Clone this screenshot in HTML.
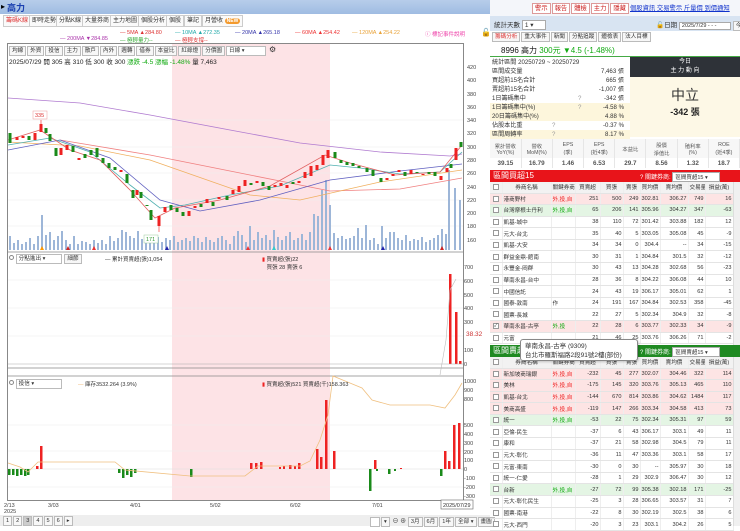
<!DOCTYPE html>
<html><head><meta charset="utf-8">
<style>
*{margin:0;padding:0;box-sizing:border-box}
body{width:740px;height:526px;overflow:hidden;background:#fff;font-family:"Liberation Sans","Noto Sans CJK TC",sans-serif;font-size:7px;color:#333;position:relative}
.a{position:absolute;white-space:nowrap}
.tab{position:absolute;top:15px;height:12px;border:1px solid #ccc;background:#fafafa;font-size:6px;line-height:10px;padding:0 2px;color:#333}
.tb{display:inline-block;border:1px solid #bbb;background:#f7f7f7;padding:0 2px;margin-right:1px;line-height:8px;font-size:5.6px}
table{border-collapse:collapse;table-layout:fixed}
.bt td{height:11.6px;border-bottom:1px solid #e4e4e4;border-right:1px solid #eee;font-size:5.6px;padding:0 1px;text-align:right;white-space:nowrap;overflow:hidden}
.bt td.n{text-align:left}
.bt td.c{text-align:center;padding:0}
.bt tr.h td{background:#f2f2f2;text-align:center;height:11px}
.bt tr.p td{background:#fde4e4}
.bt tr.g td{background:#e4f5e4}
.cb{display:inline-block;width:6px;height:6px;border:1px solid #999;background:#fff;vertical-align:middle;font-size:5px;line-height:5px}
.st div{height:9px;line-height:9px;font-size:6.1px;position:relative;padding-left:2px}
.st span{position:absolute;right:6px}
.st .y{background:#fdf6dc}
.st i{position:absolute;left:88px;color:#999;font-style:normal}
.r{color:#e22}.gr{color:#1a1}
.fin td{font-size:5.3px;text-align:center;border-right:1px solid #e6e6e6;color:#555}
.fin tr.v td{font-size:6.3px;font-weight:bold;height:10px}
.btn{display:inline-block;border:1px solid #d99;background:#fff;color:#c22;font-size:6.3px;padding:0 2px;line-height:9px;margin-right:1px}
</style></head><body>

<!-- ============ LEFT ============ -->
<div class="a" style="left:0;top:0;width:490px;height:14px;background:linear-gradient(#b7cdea,#9fbce2)"></div>
<div class="a" style="left:1px;top:2px;font-size:8px;color:#000">▸</div>
<div class="a" style="left:7px;top:1px;font-size:9px;font-weight:bold;color:#1a3fb0">高力</div>

<div class="tab" style="left:3px;color:#d33">籌碼K線</div>
<div class="tab" style="left:29px">即時走勢</div>
<div class="tab" style="left:56px">分點K線</div>
<div class="tab" style="left:82px">大量券商</div>
<div class="tab" style="left:110px">主力地圖</div>
<div class="tab" style="left:138px">個股分析</div>
<div class="tab" style="left:166px">個股</div>
<div class="tab" style="left:184px">筆記</div>
<div class="tab" style="left:202px">月營收 <b style="background:#f39a2e;color:#fff;border-radius:4px;padding:0 2px;font-size:5px">NEW</b></div>

<div class="a" style="top:30px;left:120px;font-size:5.5px;color:#d33">— 5MA ▲284.80</div>
<div class="a" style="top:30px;left:175px;font-size:5.5px;color:#2aa">— 10MA ▲272.35</div>
<div class="a" style="top:30px;left:235px;font-size:5.5px;color:#33a">— 20MA ▲265.18</div>
<div class="a" style="top:30px;left:295px;font-size:5.5px;color:#e33">— 60MA ▲254.42</div>
<div class="a" style="top:30px;left:352px;font-size:5.5px;color:#e9a33a">— 120MA ▲254.22</div>
<div class="a" style="top:36px;left:60px;font-size:5.5px;color:#a3a">— 200MA ▼284.85</div>
<div class="a" style="top:36px;left:120px;font-size:5.5px;color:#3a3">— 極輕量力--</div>
<div class="a" style="top:36px;left:175px;font-size:5.5px;color:#d33">— 極輕支撐--</div>
<div class="a" style="top:30px;left:425px;font-size:5.5px;color:#e4a">ⓘ 標記事件說明</div>
<div class="a" style="top:28px;left:481px;font-size:8px;color:#000">🔓</div>

<!-- chart frame -->
<div class="a" style="left:7px;top:43px;width:457px;height:458px;border:1px solid #888"></div>
<div class="a" style="left:172px;top:44px;width:158px;height:456px;background:#fde3e6"></div>
<div class="a" style="left:9px;top:45px"><span class="tb">均線</span><span class="tb">外資</span><span class="tb">投信</span><span class="tb">主力</span><span class="tb">散戶</span><span class="tb">內外</span><span class="tb">週轉</span><span class="tb">借券</span><span class="tb">本益比</span><span class="tb">紅綠燈</span><span class="tb">分價圖</span><span class="tb" style="width:40px;background:#fff">日線 ▾</span> <span style="font-size:8px">⚙</span></div>
<div class="a" style="left:9px;top:56px;font-size:6.5px;color:#222">2025/07/29 開 305 高 310 低 300 收 300 <span class="gr">漲跌 -4.5 漲幅 -1.48%</span> 量 7,463</div>

<svg class="a" style="left:0;top:43px" width="490" height="472" viewBox="0 43 490 472">
 <g stroke="#eee" stroke-width="0.6">
  <line x1="8" y1="120" x2="463" y2="120"/><line x1="8" y1="147" x2="463" y2="147"/><line x1="8" y1="173" x2="463" y2="173"/><line x1="8" y1="200" x2="463" y2="200"/><line x1="8" y1="226" x2="463" y2="226"/>
  <line x1="8" y1="280" x2="463" y2="280"/><line x1="8" y1="308" x2="463" y2="308"/><line x1="8" y1="336" x2="463" y2="336"/>
  <line x1="8" y1="425" x2="463" y2="425"/><line x1="8" y1="451" x2="463" y2="451"/><line x1="8" y1="487" x2="463" y2="487"/>
 </g>
 <g font-size="5.5" fill="#444" font-family="Liberation Sans">
  <text x="467" y="69">420</text><text x="467" y="82">400</text><text x="467" y="96">380</text><text x="467" y="109">360</text><text x="467" y="122">340</text><text x="467" y="135">320</text><text x="467" y="149">300</text><text x="467" y="162">280</text><text x="467" y="175">260</text><text x="467" y="189">240</text><text x="467" y="202">220</text><text x="467" y="215">200</text><text x="467" y="228">180</text><text x="467" y="242">160</text>
  <text x="464" y="269">700</text><text x="464" y="283">600</text><text x="464" y="297">500</text><text x="464" y="310">400</text><text x="464" y="324">300</text><text x="464" y="352">100</text><text x="464" y="366">0</text>
  <text x="464" y="383">1000</text><text x="464" y="392">900</text><text x="464" y="401">800</text><text x="464" y="427">500</text><text x="464" y="436">400</text><text x="464" y="445">300</text><text x="464" y="454">200</text><text x="464" y="462">100</text><text x="464" y="471">0</text><text x="464" y="480">-100</text><text x="464" y="489">-200</text><text x="464" y="498">-300</text>
  <text x="4" y="507">2/13</text><text x="4" y="513">2025</text><text x="48" y="507">3/03</text><text x="130" y="507">4/01</text><text x="210" y="507">5/02</text><text x="290" y="507">6/02</text><text x="372" y="507">7/01</text>
 </g>
 <text x="466" y="336" font-size="6.5" fill="#c33">38.32</text>
 <rect x="441" y="500" width="32" height="9" fill="#fff" stroke="#666" stroke-width="0.6"/><text x="443" y="507" font-size="5.5" fill="#333">2025/07/29</text>
 <line x1="8" y1="252" x2="463" y2="252" stroke="#888" stroke-width="0.8"/>
 <line x1="8" y1="368" x2="463" y2="368" stroke="#888" stroke-width="0.8"/>
 <line x1="8" y1="376" x2="463" y2="376" stroke="#888" stroke-width="0.8"/>
 <path stroke="#9db6d8" stroke-width="2" d="M10 250V236M14 250V243M18 250V240M22 250V244M26 250V242M30 250V238M34 250V244M38 250V236M42 250V215M46 250V235M50 250V232M54 250V240M58 250V236M62 250V231M66 250V240M70 250V244M74 250V236M78 250V244M82 250V241M86 250V242M90 250V244M94 250V240M98 250V243M102 250V240M106 250V244M110 250V236M114 250V241M118 250V238M122 250V230M126 250V232M130 250V236M134 250V238M138 250V231M142 250V239M146 250V236M150 250V238M154 250V236M158 250V237M162 250V242M166 250V238M170 250V240M174 250V236M178 250V242M182 250V240M186 250V238M190 250V241M194 250V236M198 250V238M202 250V242M206 250V237M210 250V240M214 250V242M218 250V238M222 250V236M226 250V240M230 250V244M234 250V236M238 250V231M242 250V235M246 250V242M250 250V226M254 250V240M258 250V232M262 250V238M266 250V235M270 250V240M274 250V230M278 250V237M282 250V240M286 250V236M290 250V232M294 250V240M298 250V238M302 250V234M306 250V240M310 250V232M314 250V214M318 250V216M322 250V190M326 250V180M330 250V205M334 250V233M338 250V238M342 250V236M346 250V239M350 250V238M354 250V236M358 250V228M362 250V238M366 250V225M370 250V240M374 250V238M378 250V244M382 250V226M386 250V238M390 250V232M394 250V232M398 250V238M402 250V240M406 250V235M410 250V241M414 250V239M418 250V240M422 250V237M426 250V242M430 250V240M434 250V238M438 250V235M442 250V229M446 250V234M449 250V170M455 250V188M460 250V200"/>
 <g fill="none" stroke-width="0.8">
  <polyline stroke="#b07bd0" points="8,98 80,103 150,115 230,130 300,143 380,152 450,156 462,154"/>
  <polyline stroke="#f08080" points="60,140 150,155 250,175 330,191 400,189 462,178"/>
  <polyline stroke="#f0b060" points="8,142 80,146 150,160 250,195 300,200 380,182 462,170"/>
  <polyline stroke="#6060c0" points="8,150 60,140 110,158 160,200 200,211 260,200 330,180 400,171 462,164"/>
  <polyline stroke="#50b0b0" points="8,145 50,138 90,152 130,185 160,208 185,205 230,195 280,186 330,165 360,168 400,174 440,172 462,152"/>
  <polyline stroke="#e06060" points="8,140 40,130 70,150 100,160 130,190 155,218 175,208 220,200 270,186 325,155 350,163 395,175 440,172 462,145"/>
 </g>
 <g stroke-width="0.6" transform="translate(0.5,0)">
  <rect x="8" y="133" width="3" height="10" fill="#1a8a1a"/>
  <rect x="15" y="137" width="3" height="3" fill="#e22"/>
  <rect x="21" y="136" width="3" height="2" fill="#e22"/>
  <rect x="27" y="136" width="3" height="4" fill="#1a8a1a"/>
  <rect x="33" y="133" width="3" height="7" fill="#e22"/>
  <rect x="39" y="124" width="3" height="8" fill="#e22"/><line x1="40.5" y1="120" x2="40.5" y2="124" stroke="#e22"/>
  <rect x="44" y="128" width="3" height="5" fill="#1a8a1a"/>
  <rect x="48" y="134" width="3" height="7" fill="#1a8a1a"/>
  <rect x="54" y="148" width="3" height="8" fill="#1a8a1a"/>
  <rect x="59" y="148" width="3" height="7" fill="#e22"/>
  <rect x="65" y="145" width="3" height="5" fill="#e22"/>
  <rect x="71" y="146" width="3" height="6" fill="#1a8a1a"/>
  <rect x="77" y="158" width="3" height="2" fill="#e22"/>
  <rect x="83" y="154" width="3" height="4" fill="#1a8a1a"/>
  <rect x="89" y="150" width="3" height="5" fill="#1a8a1a"/>
  <rect x="95" y="148" width="3" height="9" fill="#1a8a1a"/>
  <rect x="101" y="158" width="3" height="5" fill="#1a8a1a"/>
  <rect x="107" y="163" width="3" height="5" fill="#1a8a1a"/>
  <rect x="113" y="167" width="3" height="3" fill="#1a8a1a"/>
  <rect x="119" y="170" width="3" height="2" fill="#e22"/>
  <rect x="125" y="174" width="3" height="9" fill="#1a8a1a"/>
  <rect x="131" y="190" width="3" height="8" fill="#1a8a1a"/>
  <rect x="135" y="190" width="3" height="5" fill="#e22"/>
  <rect x="139" y="192" width="3" height="6" fill="#1a8a1a"/>
  <rect x="145" y="205" width="3" height="1" fill="#1a8a1a"/>
  <rect x="149" y="210" width="3" height="10" fill="#1a8a1a"/>
  <rect x="157" y="216" width="3" height="10" fill="#e22"/><line x1="158.5" y1="226" x2="158.5" y2="232" stroke="#e22"/>
  <rect x="163" y="207" width="3" height="5" fill="#e22"/>
  <rect x="169" y="205" width="3" height="5" fill="#1a8a1a"/>
  <rect x="175" y="208" width="3" height="4" fill="#1a8a1a"/>
  <rect x="181" y="212" width="3" height="4" fill="#1a8a1a"/>
  <rect x="187" y="211" width="3" height="5" fill="#e22"/>
  <rect x="193" y="206" width="3" height="2" fill="#e22"/>
  <rect x="199" y="204" width="3" height="3" fill="#1a8a1a"/>
  <rect x="205" y="199" width="3" height="4" fill="#e22"/>
  <rect x="211" y="202" width="3" height="4" fill="#1a8a1a"/>
  <rect x="217" y="197" width="3" height="2" fill="#e22"/>
  <rect x="225" y="196" width="3" height="4" fill="#1a8a1a"/>
  <rect x="231" y="190" width="3" height="4" fill="#e22"/>
  <rect x="237" y="186" width="3" height="6" fill="#e22"/>
  <rect x="243" y="180" width="3" height="6" fill="#e22"/>
  <rect x="249" y="183" width="3" height="2" fill="#1a8a1a"/>
  <rect x="255" y="181" width="3" height="2" fill="#e22"/>
  <rect x="261" y="182" width="3" height="4" fill="#1a8a1a"/>
  <rect x="267" y="186" width="3" height="4" fill="#1a8a1a"/>
  <rect x="273" y="185" width="3" height="2" fill="#e22"/>
  <rect x="279" y="183" width="3" height="3" fill="#e22"/>
  <rect x="285" y="185" width="3" height="3" fill="#e22"/>
  <rect x="291" y="182" width="3" height="2" fill="#1a8a1a"/>
  <rect x="297" y="181" width="3" height="2" fill="#e22"/>
  <rect x="303" y="172" width="3" height="6" fill="#e22"/>
  <rect x="309" y="166" width="3" height="10" fill="#e22"/>
  <rect x="315" y="165" width="3" height="5" fill="#e22"/>
  <rect x="321" y="155" width="3" height="10" fill="#e22"/>
  <rect x="326" y="150" width="3" height="8" fill="#e22"/>
  <rect x="333" y="152" width="3" height="6" fill="#1a8a1a"/>
  <rect x="339" y="160" width="3" height="3" fill="#1a8a1a"/>
  <rect x="345" y="162" width="3" height="3" fill="#1a8a1a"/>
  <rect x="351" y="163" width="3" height="3" fill="#1a8a1a"/>
  <rect x="357" y="166" width="3" height="2" fill="#1a8a1a"/>
  <rect x="365" y="168" width="3" height="4" fill="#1a8a1a"/>
  <rect x="371" y="170" width="3" height="6" fill="#1a8a1a"/>
  <rect x="379" y="178" width="3" height="4" fill="#1a8a1a"/>
  <rect x="385" y="178" width="3" height="2" fill="#e22"/>
  <rect x="391" y="174" width="3" height="2" fill="#e22"/>
  <rect x="397" y="170" width="3" height="2" fill="#e22"/>
  <rect x="403" y="172" width="3" height="4" fill="#1a8a1a"/>
  <rect x="409" y="170" width="3" height="4" fill="#e22"/>
  <rect x="415" y="172" width="3" height="1" fill="#1a8a1a"/>
  <rect x="421" y="174" width="3" height="1" fill="#e22"/>
  <rect x="427" y="172" width="3" height="2" fill="#1a8a1a"/>
  <rect x="433" y="172" width="3" height="4" fill="#1a8a1a"/>
  <rect x="439" y="176" width="3" height="4" fill="#e22"/>
  <rect x="445" y="168" width="3" height="4" fill="#e22"/>
  <rect x="449" y="164" width="3" height="4" fill="#1a8a1a"/>
  <rect x="454" y="148" width="3" height="12" fill="#e22"/>
  <rect x="459" y="142" width="3" height="5" fill="#1a8a1a"/>
 </g>
 <rect x="33" y="111" width="14" height="8" fill="#fff" stroke="#e99" stroke-width="0.5"/><text x="35" y="117" font-size="5.5" fill="#d33">335</text>
 <rect x="144" y="235" width="14" height="8" fill="#fff" stroke="#9c9" stroke-width="0.5"/><text x="146" y="241" font-size="5.5" fill="#393">171</text>
 <g><path d="M40 250l2-4 2 4z" fill="#f90"/><path d="M66 250l2-4 2 4z" fill="#c22"/><path d="M92 250l2-4 2 4z" fill="#e33"/><path d="M165 250l2-4 2 4z" fill="#22a"/><path d="M246 250l2-4 2 4z" fill="#e33"/><path d="M272 250l2-4 2 4z" fill="#3cc"/><path d="M328 250l2-4 2 4z" fill="#e33"/><path d="M381 250l2-4 2 4z" fill="#22a"/><path d="M440 250l2-4 2 4z" fill="#c22"/></g>
 <rect x="449" y="274" width="2.5" height="90" fill="#e22"/><rect x="455" y="312" width="2.5" height="52" fill="#e22"/><rect x="459" y="361" width="2.5" height="3" fill="#e22"/>
 <line x1="8" y1="364" x2="463" y2="364" stroke="#aaa" stroke-width="0.5"/>
 <polyline fill="none" stroke="#bbb" stroke-width="0.6" points="440,375 446,340 450,290 456,279"/>
 <line x1="8" y1="469" x2="463" y2="469" stroke="#ddd" stroke-width="0.5"/>
 <g fill="#1a8a1a"><rect x="8" y="469" width="2.5" height="6"/><rect x="12" y="469" width="2.5" height="6"/><rect x="16" y="469" width="2.5" height="7"/><rect x="20" y="469" width="2.5" height="6"/><rect x="24" y="469" width="2.5" height="7"/><rect x="27" y="469" width="2.5" height="6"/><rect x="118" y="469" width="2.5" height="4"/><rect x="122" y="469" width="2.5" height="9"/><rect x="126" y="469" width="2.5" height="6"/><rect x="130" y="469" width="2.5" height="8"/><rect x="134" y="469" width="2.5" height="4"/><rect x="190" y="469" width="2.5" height="8"/><rect x="369" y="469" width="2.5" height="22"/><rect x="376" y="469" width="2" height="2"/><rect x="388" y="469" width="2.5" height="5"/><rect x="394" y="469" width="2" height="2"/><rect x="440" y="469" width="2.5" height="7"/></g>
 <g fill="#e22"><rect x="36" y="466" width="2.5" height="3"/><rect x="40" y="446" width="2.5" height="23"/><rect x="250" y="463" width="2.5" height="6"/><rect x="255" y="463" width="2.5" height="6"/><rect x="260" y="462" width="2.5" height="7"/><rect x="279" y="467" width="2" height="2"/><rect x="283" y="466" width="2" height="3"/><rect x="289" y="465" width="2.5" height="4"/><rect x="294" y="466" width="2" height="3"/><rect x="298" y="463" width="2.5" height="6"/><rect x="316" y="449" width="2.5" height="20"/><rect x="320" y="457" width="2.5" height="12"/><rect x="325" y="400" width="2.5" height="69"/><rect x="333" y="451" width="2.5" height="18"/><rect x="374" y="460" width="2.5" height="9"/><rect x="400" y="468" width="2" height="1"/><rect x="444" y="451" width="2.5" height="18"/><rect x="448" y="461" width="2.5" height="8"/><rect x="453" y="425" width="2.5" height="44"/><rect x="458" y="423" width="2.5" height="46"/></g>
 <polyline fill="none" stroke="#f0c080" stroke-width="0.8" points="8,463 20,467 28,472 38,462 115,462 125,470 190,476 245,476 258,466 300,466 310,461 320,440 328,415 333,376 362,388 372,400 390,405 430,405 445,408 455,395 462,383"/>
</svg>

<div class="a" style="left:9px;top:254px;font-size:6px"><span style="display:inline-block;width:5px;height:5px;border:1px solid #888;border-radius:50%"></span> <span class="tb" style="width:46px;background:#fff">分點進出 ▾</span> <span class="tb">細節</span></div>
<div class="a" style="left:105px;top:255px;font-size:5.5px">— 累計買賣超(張)1,054</div>
<div class="a" style="left:262px;top:255px;font-size:5.5px"><span class="r">▮</span> 買賣超(張)22<br>&nbsp;&nbsp;&nbsp;買張 28 賣張 6</div>
<div class="a" style="left:9px;top:379px;font-size:6px"><span style="display:inline-block;width:5px;height:5px;border:1px solid #888;border-radius:50%"></span> <span class="tb" style="width:46px;background:#fff">投信 ▾</span></div>
<div class="a" style="left:78px;top:380px;font-size:5.5px"><span style="color:#f0b060">—</span> 庫存3532.264 (3.9%)</div>
<div class="a" style="left:262px;top:380px;font-size:5.5px"><span class="r">▮</span> 買賣超(張)521 買賣超(千)158.363</div>

<div class="a" style="left:0;top:515px;width:490px;height:11px;background:#eee"></div>
<div class="a" style="left:3px;top:516px;font-size:6px"><span class="tb">1</span><span class="tb">2</span><span class="tb" style="background:#ccc">3</span><span class="tb">4</span><span class="tb">5</span><span class="tb">6</span><span class="tb">▸</span></div>
<div class="a" style="left:370px;top:516px;font-size:6px"><span class="tb" style="width:10px;background:#fff">&nbsp;</span><span class="tb">▾</span> ⊖ ⊕ <span class="tb">3月</span><span class="tb">6月</span><span class="tb">1年</span><span class="tb">全部 ▾</span><span class="tb">畫圖</span></div>

<!-- ============ RIGHT ============ -->
<div class="a" style="left:490px;top:0;width:250px;height:16px;background:#f4f6fa"></div>
<div class="a" style="left:532px;top:3px"><span class="btn">警示</span><span class="btn">報告</span><span class="btn">體檢</span><span class="btn">主力</span><span class="btn">隱藏</span></div>
<div class="a" style="left:630px;top:3px;font-size:6.3px;color:#13c;text-decoration:underline">個股資訊 交易警示 斤量價 到價通知</div>
<div class="a" style="left:490px;top:16px;width:250px;height:15px;background:#d8e4f2"></div>
<div class="a" style="left:494px;top:19px;font-size:6.5px">統計天數 <span style="display:inline-block;width:24px;border:1px solid #aaa;background:#fff;padding-left:2px">1 ▾</span></div>
<div class="a" style="left:656px;top:19px;font-size:6.5px">🔓日期 <span style="display:inline-block;width:52px;border:1px solid #aaa;background:#fff;padding-left:2px;font-size:5.5px">2025/7/29 ‑ ‑ ‑</span> <span class="tb">今天</span></div>
<div class="a" style="left:492px;top:32px;font-size:6px"><span class="tb" style="color:#d33">籌碼分析</span><span class="tb">重大事件</span><span class="tb">新聞</span><span class="tb">分點追蹤</span><span class="tb">體檢表</span><span class="tb">法人目標</span></div>
<div class="a" style="left:490px;top:43px;width:250px;height:14px;border-bottom:1.5px solid #4a4"></div>
<div class="a" style="left:501px;top:45px;font-size:8px;color:#111">8996 高力 <span class="gr">300元 ▼4.5 (-1.48%)</span></div>

<div class="a st" style="left:490px;top:58px;width:140px">
 <div>統計區間 20250729 ~ 20250729</div>
 <div>區間成交量<span>7,463 張</span></div>
 <div>買超前15名合計<span>665 張</span></div>
 <div>賣超前15名合計<span>-1,007 張</span></div>
 <div>1日籌碼集中<i>?</i><span>-342 張</span></div>
 <div class="y">1日籌碼集中(%)<i>?</i><span>-4.58 %</span></div>
 <div class="y">20日籌碼集中(%)<span>4.88 %</span></div>
 <div>佔股本比重<i style="left:62px">?</i><span>-0.37 %</span></div>
 <div class="y">區間周轉率<i style="left:62px">?</i><span>8.17 %</span></div>
</div>
<div class="a" style="left:630px;top:57px;width:110px;height:20px;background:#2e3238;color:#fff;text-align:center;font-size:6px;line-height:9px;padding-top:1px">今日<br>主 力 動 向</div>
<div class="a" style="left:630px;top:77px;width:110px;height:60px;background:#fdf8e6;text-align:center">
 <div style="font-size:14px;color:#333;margin-top:8px">中立</div>
 <div style="font-size:9px;font-weight:bold;color:#222">-342 張</div>
</div>

<table class="a fin" style="left:490px;top:139px;width:250px">
 <tr style="height:19px;background:#f7f7f7"><td>累計營收<br>YoY(%)</td><td>營收<br>MoM(%)</td><td>EPS<br>(季)</td><td>EPS<br>(近4季)</td><td>本益比</td><td>股價<br>淨值比</td><td>殖利率<br>(%)</td><td>ROE<br>(近4季)</td></tr>
 <tr class="v"><td class="r">39.15</td><td class="r">16.79</td><td class="r">1.46</td><td class="r">6.53</td><td class="gr">29.7</td><td class="gr">8.56</td><td class="gr">1.32</td><td>18.7</td></tr>
</table>

<div class="a" style="left:490px;top:170px;width:250px;height:12px;background:#e8141a;color:#fff;font-size:8px;line-height:12px;padding-left:3px">區間買超15</div>
<div class="a" style="left:640px;top:172px;font-size:6px;color:#fff">? 關鍵券商: <span style="display:inline-block;width:48px;background:#fff;color:#333;border:1px solid #aaa;padding-left:2px;font-size:5.5px">區間買超15 ▾</span></div>

<table class="a bt" style="left:490px;top:182px;width:243px">
 <colgroup><col style="width:12px"><col style="width:49px"><col style="width:24px"><col style="width:25px"><col style="width:23px"><col style="width:17px"><col style="width:20px"><col style="width:28px"><col style="width:17px"><col style="width:28px"></colgroup>
 <tr class="h"><td class="c"><span class="cb"></span></td><td>券商名稱</td><td>關鍵券商</td><td>買賣超</td><td>買張</td><td>賣張</td><td>買均價</td><td>賣均價</td><td>交易量</td><td>損益(萬)</td></tr>
 <tr class="p"><td class="c"><span class="cb"></span></td><td class="n">港商野村</td><td class="n r">外,投,自</td><td>251</td><td>500</td><td>249</td><td>302.81</td><td>306.27</td><td>749</td><td>16</td></tr>
 <tr class="g"><td class="c"><span class="cb"></span></td><td class="n">台灣摩根士丹利</td><td class="n gr">外,投,自</td><td>65</td><td>206</td><td>141</td><td>305.96</td><td>304.27</td><td>347</td><td>-63</td></tr>
 <tr><td class="c"><span class="cb"></span></td><td class="n">凱基-城中</td><td></td><td>38</td><td>110</td><td>72</td><td>301.42</td><td>303.88</td><td>182</td><td>12</td></tr>
 <tr><td class="c"><span class="cb"></span></td><td class="n">元大-台北</td><td></td><td>35</td><td>40</td><td>5</td><td>303.05</td><td>305.08</td><td>45</td><td>-9</td></tr>
 <tr><td class="c"><span class="cb"></span></td><td class="n">凱基-大安</td><td></td><td>34</td><td>34</td><td>0</td><td>304.4</td><td>--</td><td>34</td><td>-15</td></tr>
 <tr><td class="c"><span class="cb"></span></td><td class="n">群益金鼎-館南</td><td></td><td>30</td><td>31</td><td>1</td><td>304.84</td><td>301.5</td><td>32</td><td>-12</td></tr>
 <tr><td class="c"><span class="cb"></span></td><td class="n">永豐金-岡群</td><td></td><td>30</td><td>43</td><td>13</td><td>304.28</td><td>302.68</td><td>56</td><td>-23</td></tr>
 <tr><td class="c"><span class="cb"></span></td><td class="n">華南永昌-台中</td><td></td><td>28</td><td>36</td><td>8</td><td>304.22</td><td>306.08</td><td>44</td><td>10</td></tr>
 <tr><td class="c"><span class="cb"></span></td><td class="n">中國信託</td><td></td><td>24</td><td>43</td><td>19</td><td>306.17</td><td>305.01</td><td>62</td><td>1</td></tr>
 <tr><td class="c"><span class="cb"></span></td><td class="n">國泰-敦南</td><td class="n">作</td><td>24</td><td>191</td><td>167</td><td>304.84</td><td>302.53</td><td>358</td><td>-45</td></tr>
 <tr><td class="c"><span class="cb"></span></td><td class="n">國票-長城</td><td></td><td>22</td><td>27</td><td>5</td><td>302.34</td><td>304.9</td><td>32</td><td>-8</td></tr>
 <tr class="p"><td class="c"><span class="cb">✓</span></td><td class="n">華南永昌-古亭</td><td class="n gr">外,投</td><td>22</td><td>28</td><td>6</td><td>303.77</td><td>302.33</td><td>34</td><td>-9</td></tr>
 <tr><td class="c"><span class="cb"></span></td><td class="n">元富</td><td></td><td>21</td><td>46</td><td>25</td><td>303.76</td><td>306.26</td><td>71</td><td>-2</td></tr>
</table>
<div class="a" style="left:733px;top:182px;width:7px;height:163px;background:#f0f0f0;border-left:1px solid #ddd"></div>

<div class="a" style="left:490px;top:345px;width:250px;height:12px;background:#1f8a22;color:#fff;font-size:8px;line-height:12px;padding-left:3px">區間賣超15</div>
<div class="a" style="left:640px;top:347px;font-size:6px;color:#fff">? 關鍵券商: <span style="display:inline-block;width:48px;background:#fff;color:#333;border:1px solid #aaa;padding-left:2px;font-size:5.5px">區間賣超15 ▾</span></div>

<table class="a bt" style="left:490px;top:357px;width:243px">
 <colgroup><col style="width:12px"><col style="width:49px"><col style="width:24px"><col style="width:25px"><col style="width:23px"><col style="width:17px"><col style="width:20px"><col style="width:28px"><col style="width:17px"><col style="width:28px"></colgroup>
 <tr class="h"><td class="c"><span class="cb"></span></td><td>券商名稱</td><td>關鍵券商</td><td>買賣超</td><td>買張</td><td>賣張</td><td>買均價</td><td>賣均價</td><td>交易量</td><td>損益(萬)</td></tr>
 <tr class="p"><td class="c"><span class="cb"></span></td><td class="n">新加坡商瑞銀</td><td class="n r">外,投,自</td><td>-232</td><td>45</td><td>277</td><td>302.07</td><td>304.46</td><td>322</td><td>114</td></tr>
 <tr class="p"><td class="c"><span class="cb"></span></td><td class="n">美林</td><td class="n r">外,投,自</td><td>-175</td><td>145</td><td>320</td><td>303.76</td><td>305.13</td><td>465</td><td>110</td></tr>
 <tr class="p"><td class="c"><span class="cb"></span></td><td class="n">凱基-台北</td><td class="n r">外,投,自</td><td>-144</td><td>670</td><td>814</td><td>303.86</td><td>304.62</td><td>1484</td><td>117</td></tr>
 <tr class="p"><td class="c"><span class="cb"></span></td><td class="n">美商高盛</td><td class="n r">外,投,自</td><td>-119</td><td>147</td><td>266</td><td>303.34</td><td>304.58</td><td>413</td><td>73</td></tr>
 <tr class="g"><td class="c"><span class="cb"></span></td><td class="n">統一</td><td class="n gr">外,投,自</td><td>-53</td><td>22</td><td>75</td><td>302.34</td><td>305.31</td><td>97</td><td>59</td></tr>
 <tr><td class="c"><span class="cb"></span></td><td class="n">亞倫-民生</td><td></td><td>-37</td><td>6</td><td>43</td><td>306.17</td><td>303.1</td><td>49</td><td>11</td></tr>
 <tr><td class="c"><span class="cb"></span></td><td class="n">康和</td><td></td><td>-37</td><td>21</td><td>58</td><td>302.98</td><td>304.5</td><td>79</td><td>11</td></tr>
 <tr><td class="c"><span class="cb"></span></td><td class="n">元大-彰化</td><td></td><td>-36</td><td>11</td><td>47</td><td>303.36</td><td>303.1</td><td>58</td><td>17</td></tr>
 <tr><td class="c"><span class="cb"></span></td><td class="n">元富-東南</td><td></td><td>-30</td><td>0</td><td>30</td><td>--</td><td>305.97</td><td>30</td><td>18</td></tr>
 <tr><td class="c"><span class="cb"></span></td><td class="n">統一-仁愛</td><td></td><td>-28</td><td>1</td><td>29</td><td>302.9</td><td>306.47</td><td>30</td><td>12</td></tr>
 <tr class="g"><td class="c"><span class="cb"></span></td><td class="n">台新</td><td class="n gr">外,投,自</td><td>-27</td><td>72</td><td>99</td><td>305.38</td><td>302.18</td><td>171</td><td>-25</td></tr>
 <tr><td class="c"><span class="cb"></span></td><td class="n">元大-彰化民生</td><td></td><td>-25</td><td>3</td><td>28</td><td>306.65</td><td>303.57</td><td>31</td><td>7</td></tr>
 <tr><td class="c"><span class="cb"></span></td><td class="n">國票-南港</td><td></td><td>-22</td><td>8</td><td>30</td><td>302.19</td><td>302.5</td><td>38</td><td>6</td></tr>
 <tr><td class="c"><span class="cb"></span></td><td class="n">元大-西門</td><td></td><td>-20</td><td>3</td><td>23</td><td>303.1</td><td>304.2</td><td>26</td><td>5</td></tr>
</table>
<div class="a" style="left:733px;top:357px;width:7px;height:169px;background:#f0f0f0;border-left:1px solid #ddd"></div>

<div class="a" style="left:520px;top:339px;width:118px;height:22px;background:#fff;border:1px solid #888;border-radius:3px;font-size:6.5px;line-height:9px;padding:2px 4px;color:#333;box-shadow:1px 1px 2px rgba(0,0,0,.2)">華南永昌-古亭 (9309)<br>台北市羅斯福路2段91號2樓(部份)</div>

</body></html>
